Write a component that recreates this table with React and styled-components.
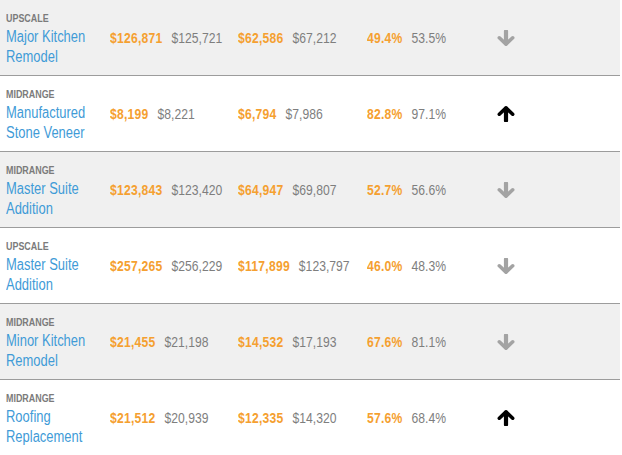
import React from "react";
import styled, { createGlobalStyle } from "styled-components";

const Global = createGlobalStyle`
  html, body { margin: 0; padding: 0; background: #fff; }
  body { font-family: "Liberation Sans", Arial, sans-serif; }
`;

const Table = styled.div`
  width: 620px;
  display: flex;
  flex-direction: column;
`;

const Row = styled.div`
  display: grid;
  grid-template-columns: 104px 128px 129px 130px 1fr;
  align-items: center;
  height: 76px;
  box-sizing: border-box;
  padding-left: 6px;
  background: ${(p) => (p.$shade ? "#f0f0f0" : "#ffffff")};
  border-bottom: ${(p) => (p.$last ? "none" : "1px solid #9c9c9c")};
`;

/* Condensed look: Liberation Sans narrowed horizontally */
const NameCell = styled.div`
  display: flex;
  flex-direction: column;
  align-self: start;
  padding-top: 11px;
  width: 124px;
  transform: scaleX(0.81);
  transform-origin: left top;
`;

const Tier = styled.div`
  font-size: 11px;
  line-height: 14px;
  font-weight: bold;
  color: #7b7b7b;
  text-transform: uppercase;
`;

const Name = styled.div`
  margin-top: 2px;
  font-size: 16px;
  line-height: 20px;
  color: #3f9bd7;
`;

const Pair = styled.div`
  display: flex;
  align-items: baseline;
  gap: 11px;
  font-size: 15px;
  line-height: 18px;
  white-space: nowrap;
  transform: scaleX(0.81);
  transform-origin: left center;
`;

const Now = styled.span`
  color: #f5a030;
  font-weight: bold;
  letter-spacing: 0.3px;
`;

const Prev = styled.span`
  color: #7e7e7e;
`;

const Trend = styled.div`
  display: flex;
  align-items: center;
  color: ${(p) => (p.$up ? "#000" : "#a3a3a3")};
`;

const ArrowIcon = ({ up }) => (
  <svg width="18" height="16" viewBox="0 0 18 16" style={{ transform: up ? "none" : "rotate(180deg)" }}>
    <polyline
      points="2.3,8.2 9,1.9 15.7,8.2"
      fill="none"
      stroke="currentColor"
      strokeWidth="3.6"
      strokeLinecap="round"
      strokeLinejoin="round"
    />
    <line x1="9" y1="2.5" x2="9" y2="14.6" stroke="currentColor" strokeWidth="4.2" strokeLinecap="round" />
  </svg>
);

const rows = [
  { tier: "Upscale", name: "Major Kitchen Remodel", c: ["$126,871", "$125,721"], v: ["$62,586", "$67,212"], p: ["49.4%", "53.5%"], up: false },
  { tier: "Midrange", name: "Manufactured Stone Veneer", c: ["$8,199", "$8,221"], v: ["$6,794", "$7,986"], p: ["82.8%", "97.1%"], up: true },
  { tier: "Midrange", name: "Master Suite Addition", c: ["$123,843", "$123,420"], v: ["$64,947", "$69,807"], p: ["52.7%", "56.6%"], up: false },
  { tier: "Upscale", name: "Master Suite Addition", c: ["$257,265", "$256,229"], v: ["$117,899", "$123,797"], p: ["46.0%", "48.3%"], up: false },
  { tier: "Midrange", name: "Minor Kitchen Remodel", c: ["$21,455", "$21,198"], v: ["$14,532", "$17,193"], p: ["67.6%", "81.1%"], up: false },
  { tier: "Midrange", name: "Roofing Replacement", c: ["$21,512", "$20,939"], v: ["$12,335", "$14,320"], p: ["57.6%", "68.4%"], up: true },
];

export default function App() {
  return (
    <>
      <Global />
      <Table>
        {rows.map((r, i) => (
          <Row key={i} $shade={i % 2 === 0} $last={i === rows.length - 1}>
            <NameCell>
              <Tier>{r.tier}</Tier>
              <Name>{r.name}</Name>
            </NameCell>
            <Pair><Now>{r.c[0]}</Now><Prev>{r.c[1]}</Prev></Pair>
            <Pair><Now>{r.v[0]}</Now><Prev>{r.v[1]}</Prev></Pair>
            <Pair><Now>{r.p[0]}</Now><Prev>{r.p[1]}</Prev></Pair>
            <Trend $up={r.up}><ArrowIcon up={r.up} /></Trend>
          </Row>
        ))}
      </Table>
    </>
  );
}
